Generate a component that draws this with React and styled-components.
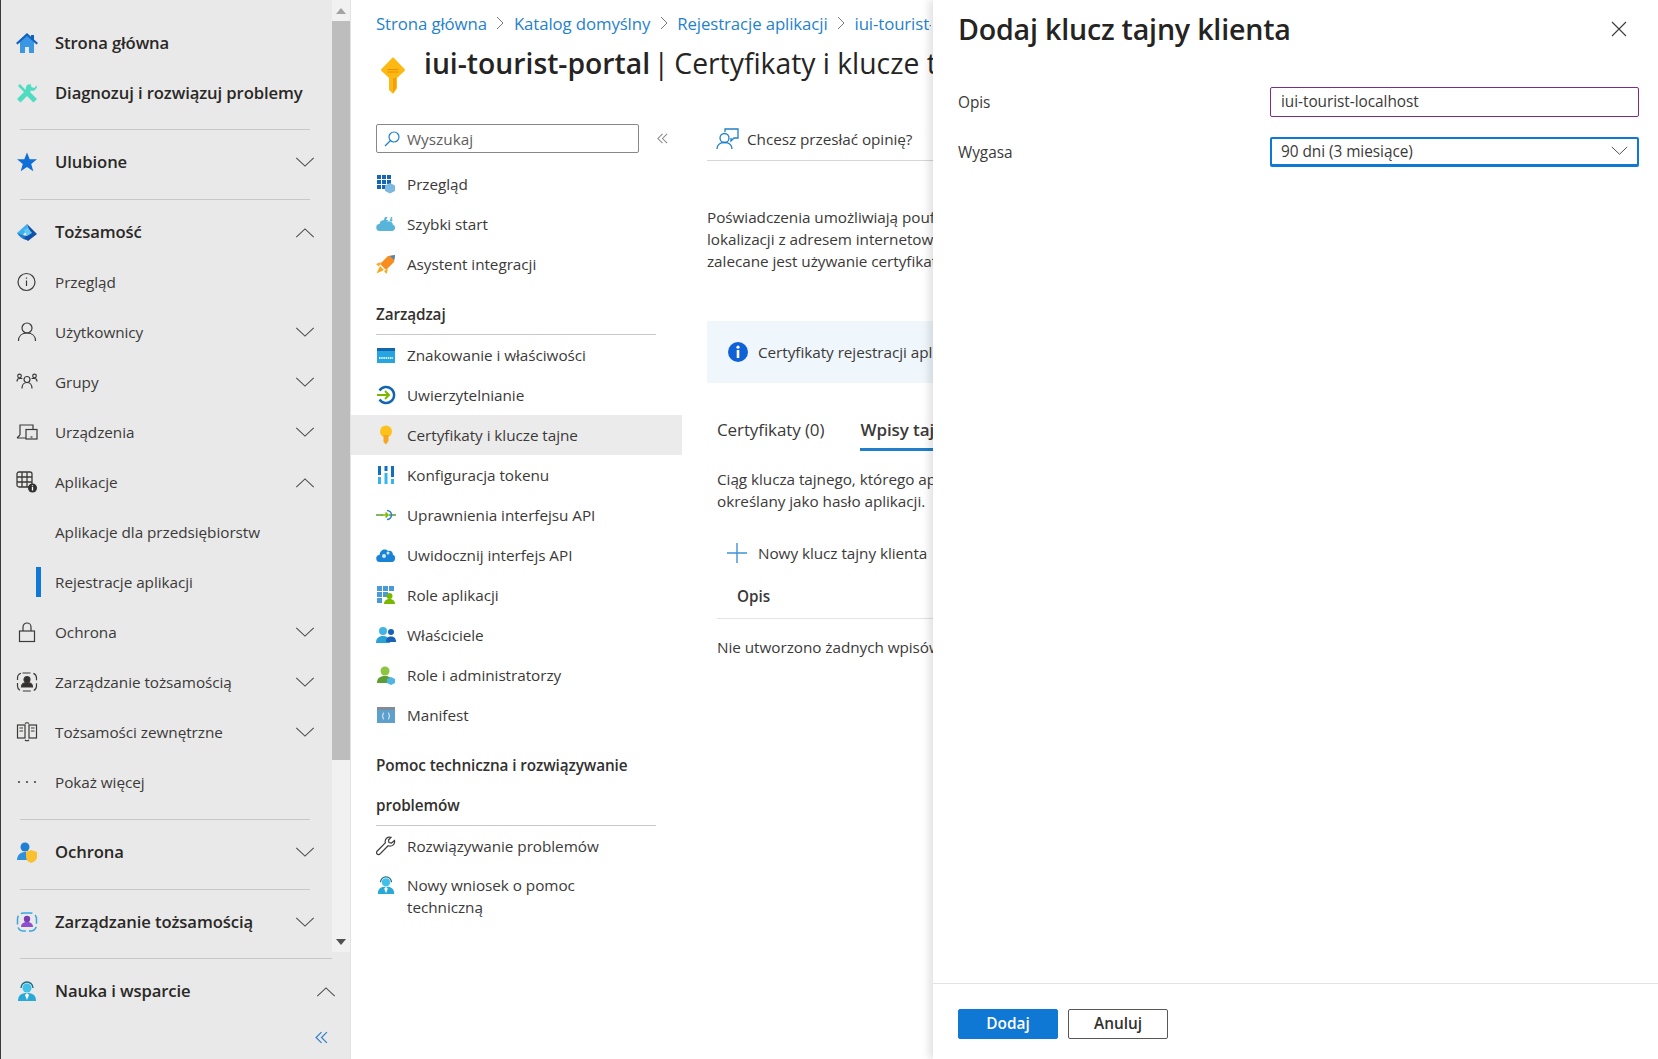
import React from 'react';
import styled, { createGlobalStyle } from 'styled-components';

const GlobalStyle = createGlobalStyle`
    html, body {
        margin: 0;
        height: 100%;
        overflow: hidden;
        background: #fff;
    }

    body {
        font-family: "Open Sans", "Noto Sans", "Liberation Sans", sans-serif;
        color: #323130;
    }

    * {
        box-sizing: border-box;
    }
`;

const Page = styled.div`
    position: relative;
    display: flex;
    width: 1658px;
    height: 1059px;
    overflow: hidden;
`;

/* left portal navigation */

const Nav = styled.nav`
    display: flex;
    flex-direction: column;
    flex: 0 0 350px;
    height: 100%;
    background: #e9e9e9;
    border-left: 1px solid #3a3a3a;
`;

const NavScrollArea = styled.div`
    display: flex;
    flex: 0 0 952px;
`;

const NavList = styled.div`
    flex: 1;
    min-width: 0;
    padding-top: 18px;
`;

const Scrollbar = styled.div`
    display: flex;
    flex-direction: column;
    flex: 0 0 18px;
    background: #f1f1f1;
`;

const ScrollArrow = styled.div`
    display: flex;
    align-items: center;
    justify-content: center;
    flex: 0 0 21px;
    color: ${({ $dark }) => ($dark ? '#505050' : '#a3a3a3')};
`;

const ScrollThumb = styled.div`
    flex: 0 0 739px;
    background: #bdbdbd;
`;

const ScrollTrack = styled.div`
    flex: 1;
`;

const NavRow = styled.div`
    display: flex;
    align-items: center;
    height: 50px;
    padding: 0 ${({ $wide }) => ($wide ? '14px' : '17px')} 0 15px;
    position: relative;
`;

const NavIcon = styled.span`
    display: flex;
    align-items: center;
    justify-content: center;
    flex: 0 0 22px;
    height: 22px;
    margin-right: 17px;
`;

const NavLabel = styled.span`
    flex: 1;
    white-space: nowrap;
    padding-bottom: ${({ $main }) => ($main ? '2px' : '0')};
    font-size: ${({ $main }) => ($main ? '16.65px' : '15.3px')};
    font-weight: ${({ $main }) => ($main ? 600 : 400)};
    letter-spacing: ${({ $main }) => ($main ? '-0.1px' : '-0.05px')};
    color: ${({ $main }) => ($main ? '#292827' : '#3b3a39')};
`;

const ActiveMark = styled.span`
    position: absolute;
    left: 35px;
    top: 10px;
    width: 5px;
    height: 30px;
    background: #0f78d4;
`;

const NavDivider = styled.div`
    height: 1px;
    background: #c8c8c8;
    margin: ${({ $top }) => $top}px ${({ $full }) => ($full ? '18px' : '22px')} 7px 19px;
`;

const NavFooter = styled.div`
    flex: 1;
`;

const NavCollapse = styled.div`
    display: flex;
    justify-content: flex-end;
    padding: 15px 22px 0 0;
`;

/* middle: blade header, resource menu and content */

const Main = styled.main`
    display: flex;
    flex-direction: column;
    flex: 1;
    min-width: 0;
    border-left: 1px solid #e3e3e3;
`;

const Header = styled.header`
    flex: 0 0 124px;
    padding: 10px 0 0 25px;
    white-space: nowrap;
`;

const Breadcrumb = styled.div`
    display: flex;
    align-items: center;
    height: 26px;
    font-size: 16.8px;
    letter-spacing: -0.1px;
    color: #1f82ce;
`;

const CrumbArrow = styled.svg`
    width: 8px;
    height: 14px;
    margin: 0 9.5px;
`;

const LastCrumb = styled.span`
    width: 76px;
    overflow: hidden;
`;

const TitleRow = styled.div`
    display: flex;
    height: 60px;
    margin-top: 8px;
`;

const TitleIcon = styled.span`
    flex: 0 0 48px;
    padding: 13px 0 0 4px;
`;

const Title = styled.h1`
    margin: 0;
    font-size: 28.3px;
    line-height: 39px;
    font-weight: 400;
    color: #252423;

    strong {
        font-weight: 600;
    }
`;

const TitleSeparator = styled.span`
    margin: 0 -2px 0 -4px;
`;

const Body = styled.div`
    display: flex;
    flex: 1;
    min-height: 0;
`;

const Menu = styled.div`
    flex: 0 0 331px;
`;

const SearchRow = styled.div`
    display: flex;
    align-items: center;
    height: 29px;
    margin: 0 0 11px 25px;
`;

const SearchBox = styled.div`
    display: flex;
    align-items: center;
    gap: 7px;
    width: 263px;
    height: 29px;
    padding: 1px 0 0 7px;
    border: 1px solid #8a8886;
    border-radius: 2px;
    font-size: 15.3px;
    color: #605e5c;
`;

const MenuCollapse = styled.span`
    display: flex;
    margin-left: 18px;
`;

const MenuItem = styled.div`
    display: flex;
    align-items: ${({ $wrap }) => ($wrap ? 'flex-start' : 'center')};
    height: ${({ $wrap }) => ($wrap ? 'auto' : '40px')};
    padding: ${({ $wrap }) => ($wrap ? '8px' : '0')} 0 0 25px;
    background: ${({ $active }) => ($active ? '#ebebeb' : 'transparent')};
`;

const MenuIcon = styled.span`
    display: flex;
    align-items: center;
    justify-content: center;
    flex: 0 0 20px;
    height: 22px;
    margin-right: 11px;
`;

const MenuLabel = styled.span`
    font-size: 15.3px;
    line-height: 22px;
    letter-spacing: -0.05px;
    color: #3b3a39;
    width: ${({ $wrap }) => ($wrap ? '190px' : 'auto')};
    white-space: ${({ $wrap }) => ($wrap ? 'normal' : 'nowrap')};
`;

const MenuHeading = styled.div`
    width: 305px;
    margin-top: ${({ $gap }) => $gap}px;
    padding-left: 25px;
`;

const MenuHeadingText = styled.div`
    height: ${({ $lines }) => $lines * 40 + 1}px;
    border-bottom: 1px solid #c8c8c8;
    font-size: 15.3px;
    line-height: 40px;
    font-weight: 600;
    letter-spacing: -0.1px;
    color: #323130;
`;

const Content = styled.section`
    flex: 1;
    min-width: 0;
    padding-left: 25px;
    white-space: nowrap;
    overflow: hidden;
    font-size: 15.3px;
    letter-spacing: -0.05px;
    color: #3b3a39;
`;

const Toolbar = styled.div`
    display: flex;
    align-items: center;
    gap: 8px;
    height: 37px;
    padding: 0 0 6px 9px;
    border-bottom: 1px solid #d6d6d6;
`;

const Paragraph = styled.p`
    margin: ${({ $top }) => $top}px 0 0 ${({ $indent }) => $indent || 0}px;
    line-height: 22px;
`;

const InfoBand = styled.div`
    display: flex;
    align-items: center;
    gap: 10px;
    height: 62px;
    margin-top: 49px;
    padding-left: 21px;
    background: #eff6fc;
`;

const Tabs = styled.div`
    display: flex;
    gap: 36px;
    height: 32px;
    margin: 36px 0 0 10px;
`;

const Tab = styled.div`
    height: 32px;
    font-size: 17px;
    line-height: 22px;
    font-weight: ${({ $active }) => ($active ? 600 : 400)};
    letter-spacing: -0.1px;
    border-bottom: ${({ $active }) => ($active ? '3px solid #1f7fc9' : 'none')};
`;

const AddButton = styled.div`
    display: flex;
    align-items: center;
    gap: 11px;
    height: 30px;
    margin: 26px 0 0 20px;
`;

const TableHead = styled.div`
    height: 40px;
    margin: 11px 0 0 10px;
    padding-left: 20px;
    border-bottom: 1px solid #e3e3e3;
    line-height: 34px;
    font-weight: 600;
`;

/* blade lying over the page */

const Drawer = styled.aside`
    position: absolute;
    top: 0;
    right: 0;
    bottom: 0;
    display: flex;
    flex-direction: column;
    width: 725px;
    background: #fff;
    box-shadow: -4px 0 8px rgba(0, 0, 0, 0.12);
`;

const DrawerHead = styled.div`
    display: flex;
    align-items: center;
    justify-content: space-between;
    height: 58px;
    padding: 0 31px 0 25px;
`;

const DrawerTitle = styled.h2`
    margin: 0 0 2px;
    font-size: 28.6px;
    font-weight: 600;
    letter-spacing: -0.2px;
    color: #252423;
`;

const DrawerBody = styled.div`
    flex: 1;
    display: flex;
    flex-direction: column;
    gap: 20px;
    padding: 29px 19px 0 25px;
`;

const FieldRow = styled.div`
    display: grid;
    grid-template-columns: 312px 369px;
    align-items: center;
    font-size: 15.4px;
    letter-spacing: -0.05px;
    color: #3b3a39;
`;

const FieldLabel = styled.span`
    padding-top: 1px;
`;

const TextField = styled.input`
    width: 100%;
    height: 30px;
    padding: 0 10px 1px;
    border: 1px solid #7b2d8b;
    border-radius: 2px;
    outline: none;
    font: inherit;
    letter-spacing: inherit;
    color: #3b3a39;
`;

const SelectField = styled.div`
    display: flex;
    align-items: center;
    justify-content: space-between;
    height: 30px;
    padding: 0 9px 1px 9px;
    border: 2px solid #0f78d4;
    border-bottom-width: 3px;
    border-radius: 2px;
`;

const DrawerFooter = styled.div`
    display: flex;
    gap: 10px;
    flex: 0 0 76px;
    padding: 25px 0 0 25px;
    border-top: 1px solid #e3e3e3;
`;

const Button = styled.div`
    display: flex;
    align-items: center;
    justify-content: center;
    width: 100px;
    height: 30px;
    padding-bottom: 2px;
    border: 1px solid ${({ $primary }) => ($primary ? '#0f78d4' : '#5a5856')};
    border-radius: 2px;
    background: ${({ $primary }) => ($primary ? '#0f78d4' : '#fff')};
    color: ${({ $primary }) => ($primary ? '#fff' : '#323130')};
    font-size: 15.4px;
    font-weight: 600;
`;

/* icons */

const Chevron = ({ up, color = '#4a4a4a', w = 20, h = 11 }) => (
    <svg width={w} height={h} viewBox="0 0 21 12" fill="none">
        <path d={up ? 'M1 11 10.5 2 20 11' : 'M1 1l9.5 9L20 1'} stroke={color} strokeWidth="1.1" />
    </svg>
);

const DoubleArrow = ({ color, size = 11 }) => (
    <svg width={size} height={size} viewBox="0 0 12 12" fill="none">
        <path d="M6 1 1 6l5 5M11 1 6 6l5 5" stroke={color} strokeWidth="1.1" />
    </svg>
);

const Line = ({ children, size = 22, view = 22 }) => (
    <svg width={size} height={size} viewBox={`0 0 ${view} ${view}`} fill="none" stroke="#3b3a39" strokeWidth="1.2">
        {children}
    </svg>
);

const Fill = ({ children, w = 20, h = 20 }) => (
    <svg width={w} height={h} viewBox={`0 0 ${w} ${h}`}>
        {children}
    </svg>
);

const HomeIcon = () => (
    <Fill w={22} h={22}>
        <path d="M4 10v11h5v-6h4v6h5V10l-7-6z" fill="#3b97e3" />
        <path d="M11 1 0 11l1.5 1.6L11 4.2l9.5 8.4L22 11l-4-3.6V3h-3v1.7z" fill="#0f62c0" />
    </Fill>
);

const ToolsIcon = () => (
    <Fill w={22} h={22}>
        <path d="M4 2 2 4l6 6-7 7 3.5 3.5L11 14l6.5 6.5L21 17l-7-7 1-1.5c3 1 6-1 6-5l-3 2.4-2.7-.9L15 2.5c-3-.7-5.300 1.200-5.300 4L9.500 8z" fill="#4fdcc0" />
    </Fill>
);

const StarIcon = () => (
    <Fill w={22} h={22}>
        <path d="M11 1.500 13.700 8.300H21L15.200 12.900 17.300 20.200 11 16 4.700 20.200 6.800 12.900 1 8.300H8.300z" fill="#0f6fd6" />
    </Fill>
);

const IdentityIcon = () => (
    <Fill w={22} h={22}>
        <path d="M11 3 1 12l5 3.600 6-8.600z" fill="#3fb0ee" />
        <path d="M1 12c2 3 5 6 9 7l2-4-6-1z" fill="#1a7bd0" />
        <path d="M11 3l10 10-9 7-4-3 6-5z" fill="#1450a8" />
        <path d="M8 9l4-2 4 5-5 3z" fill="#5ec8f2" />
    </Fill>
);

const InfoLine = () => (
    <Line>
        <circle cx="10.500" cy="11" r="8.500" />
        <path d="M10.500 9.500v5.500M10.500 6.500v1.300" />
    </Line>
);

const UserLine = () => (
    <Line>
        <circle cx="11" cy="7" r="5" />
        <path d="M2.500 20c0-5 3.500-8 8.500-8s8.500 3 8.500 8" />
    </Line>
);

const GroupLine = () => (
    <Line>
        <circle cx="11" cy="8.500" r="3" />
        <path d="M6 17.500c0-3.500 2-6 5-6s5 2.500 5 6" />
        <circle cx="3.500" cy="5" r="1.800" />
        <circle cx="18.500" cy="5" r="1.800" />
        <path d="M1 10.500c0-2 1-3 2.500-3h3M21 10.500c0-2-1-3-2.500-3h-3" />
    </Line>
);

const DevicesLine = () => (
    <Line>
        <path d="M4 14V4h13v4M1 17h9M4 14l-3 3" />
        <rect x="10" y="8.500" width="11" height="9.500" />
        <path d="M14.500 16h2" />
    </Line>
);

const AppsLine = () => (
    <svg width="22" height="22" viewBox="0 0 22 22" fill="none" stroke="#3b3a39" strokeWidth="1.300">
        <rect x="1" y="1" width="15" height="15" rx="2" />
        <path d="M1 6h15M1 11h15M6 1v15M11 1v15" />
        <circle cx="16.500" cy="17" r="4.500" fill="#323130" stroke="none" />
        <path d="M16.500 16v3.500M16.500 14.300v.9" stroke="#fff" />
    </svg>
);

const LockLine = () => (
    <Line>
        <rect x="3.500" y="10" width="15" height="10.500" />
        <path d="M7 10V6a4 4 0 0 1 8 0v4" />
    </Line>
);

const GovernanceLine = () => (
    <Line>
        <rect x="1.500" y="2" width="19" height="18" rx="5" strokeDasharray="8 3" />
        <circle cx="11" cy="8.500" r="3" fill="#323130" />
        <path d="M5.500 16c0-3 2.500-4.500 5.500-4.500s5.500 1.500 5.500 4.500z" fill="#323130" />
    </Line>
);

const ExternalLine = () => (
    <Line>
        <rect x="1.500" y="4" width="7.500" height="13" />
        <rect x="13" y="4" width="7.500" height="13" />
        <path d="M3.500 7h3.500M3.500 10h3.500M15 7h3.500M15 10h3.500M9 2.500c1-1 3-1 4 0M9 19c1 1 3 1 4 0" />
    </Line>
);

const DotsIcon = () => (
    <Fill w={20} h={6}>
        <circle cx="2" cy="3" r="1" fill="#3b3a39" />
        <circle cx="10" cy="3" r="1" fill="#3b3a39" />
        <circle cx="18" cy="3" r="1" fill="#3b3a39" />
    </Fill>
);

const ShieldUserIcon = () => (
    <Fill w={22} h={22}>
        <circle cx="9" cy="6" r="4.500" fill="#1f7fd4" />
        <path d="M1 19c0-5 3.500-8 8-8s7 2 7 8z" fill="#2f90dc" />
        <path d="M15 9l6 2v5c0 3-3 5-6 6-3-1-5-3-5-6v-5z" fill="#fbc02d" />
    </Fill>
);

const GovernanceIcon = () => (
    <Fill w={22} h={22}>
        <rect x="1.500" y="2" width="19" height="18" rx="6" fill="none" stroke="#38a7e0" strokeWidth="1.500" strokeDasharray="9 3" />
        <circle cx="11" cy="8" r="3.200" fill="#7a3db8" />
        <path d="M5 16c0-3.500 2.500-5 6-5s6 1.500 6 5z" fill="#8e4fcf" />
    </Fill>
);

const SupportIcon = ({ size = 22 }) => (
    <svg width={size} height={size} viewBox="0 0 22 22">
        <path d="M5 8a6 6 0 0 1 12 0" fill="none" stroke="#1b6a86" strokeWidth="1.400" />
        <circle cx="11" cy="8" r="4.500" fill="#3fc1e8" />
        <path d="M2 21c0-6 3.500-8 9-8s9 2 9 8z" fill="#28a9d8" />
        <path d="M11 13l-2 2 2 5 2-5z" fill="#fff" />
    </svg>
);

const KeyIcon = () => (
    <svg width="26" height="37" viewBox="0 0 26 37">
        <path d="M13 1.500 24 13 16 20.500 16 31 13 35.500 10 32.500 10 20.500 2 13z" fill="#fdb913" stroke="#fdb913" strokeWidth="2" strokeLinejoin="round" />
        <path d="M13 21h3v10L13 35.500z" fill="#f59e0b" />
        <path d="M7.500 12.500h11M7.500 15h11" stroke="#f08c00" strokeWidth="1.200" />
    </svg>
);

const SmallKeyIcon = () => (
    <Fill w={16} h={20}>
        <circle cx="8" cy="6.500" r="6" fill="#fcc21b" />
        <path d="M5.500 10h5v6L8 19.500 5.500 17z" fill="#f5a623" />
    </Fill>
);

const OverviewIcon = () => (
    <Fill>
        <path d="M1 1h4v4H1zM6 1h4v4H6zM11 1h4v4h-4zM1 6h4v4H1zM6 6h4v4H6zM11 6h4v4h-4zM1 11h4v4H1zM6 11h4v4H6z" fill="#1566b8" />
        <path d="M14 9l5 2.500V17l-5 2.500L9 17v-5.500z" fill="#7cb8e0" />
    </Fill>
);

const CloudBoltIcon = () => (
    <Fill>
        <path d="M4 17a3.500 3.500 0 0 1-.500-7C4 6 8 5 10 8c3-2 7 0 7 3 3 0 3 6-1 6z" fill="#59b4d9" />
        <path d="M9 3 7 8h2.500L8 11l4.500-5H10l1.500-3zM15 3l-1.500 4H15l-1 2.500 3-4h-1.500L16.500 3z" fill="#59b4d9" />
    </Fill>
);

const RocketIcon = () => (
    <Fill>
        <path d="M19 1l-1 7-8 8-6-6 8-8z" fill="#f78d1e" />
        <path d="M19 1l-.8 5L14 2z" fill="#3f86c8" />
        <path d="M5 8 0 10l3 2.500zM12 15l-1.500 5L8 17zM4 12l-3.500 7.500L8 16z" fill="#f7a81e" />
    </Fill>
);

const BrandingIcon = () => (
    <Fill w={20} h={18}>
        <rect x="1" y="2" width="18" height="15" fill="#27a5e0" />
        <rect x="1" y="2" width="18" height="3" fill="#1266b0" />
        <path d="M3 12h14" stroke="#d4f2ff" strokeWidth="2" strokeDasharray="1.500 .7" />
    </Fill>
);

const AuthIcon = () => (
    <svg width="20" height="20" viewBox="0 0 20 20" fill="none">
        <path d="M3.500 5.500A8 8 0 1 1 3.500 14.500" stroke="#1266b0" strokeWidth="2.400" />
        <path d="M1 10h12M9 6l4 4-4 4" stroke="#7ab800" strokeWidth="2" />
    </svg>
);

const TokenIcon = () => (
    <svg width="18" height="20" viewBox="0 0 18 20">
        <path d="M1 1h3v9H1zM7.500 1h3v5h-3zM14 1h3v11h-3z" fill="#0f6fc0" />
        <path d="M1 12h3v7H1zM7.500 8h3v11h-3zM14 14h3v5h-3z" fill="#36b6e8" />
    </svg>
);

const PermissionIcon = () => (
    <svg width="20" height="12" viewBox="0 0 20 12" fill="none">
        <path d="M0 6h7M13 6h7" stroke="#5a9e2f" strokeWidth="1.500" />
        <path d="M11 1.500a4.500 4.500 0 1 1 0 9" stroke="#2d82c4" strokeWidth="1.500" />
        <path d="M6 6h6M9.500 3.500 12 6 9.500 8.500" stroke="#7ab800" strokeWidth="1.500" />
    </svg>
);

const ExposeIcon = () => (
    <Fill w={20} h={16}>
        <path d="M4 15a3.500 3.500 0 0 1-.500-7C4 3 9 1 12 4c3-1 5 1 5 4 3 0 3 7-1 7z" fill="#1a83d6" />
        <circle cx="8" cy="9" r="2" fill="#cfe8f7" />
        <circle cx="12" cy="6" r="1.500" fill="#cfe8f7" />
    </Fill>
);

const RolesIcon = () => (
    <Fill>
        <path d="M1 1h5v5H1zM7 1h5v5H7zM13 1h5v5h-5zM1 7h5v5H1zM7 7h5v5H7zM1 13h5v5H1z" fill="#4a9ad6" />
        <circle cx="13.500" cy="11" r="3" fill="#7ab800" />
        <path d="M8 19c0-3.500 2.500-5 5.500-5s5.500 1.500 5.500 5z" fill="#7ab800" />
    </Fill>
);

const OwnersIcon = () => (
    <Fill w={20} h={18}>
        <circle cx="7" cy="5" r="4" fill="#3fb5e6" />
        <path d="M0 17c0-5 3-7 7-7s7 2 7 7z" fill="#2aa2d6" />
        <circle cx="15" cy="6" r="3" fill="#1860b8" />
        <path d="M10 16c0-4 2-5.500 5-5.500s5 1.500 5 5.500z" fill="#1860b8" />
    </Fill>
);

const RoleAdminIcon = () => (
    <Fill w={20} h={20}>
        <circle cx="9" cy="6" r="4.500" fill="#8cc63f" />
        <path d="M1 18c0-5 3-7 8-7s7 2 7 7z" fill="#5c9e31" />
        <path d="M15 12l4 2v4l-4 2-4-2v-4z" fill="#4fb5e6" />
    </Fill>
);

const ManifestIcon = () => (
    <Fill w={20} h={18}>
        <rect x="1" y="1" width="18" height="16" fill="#5ea0cc" />
        <rect x="1" y="1" width="18" height="3" fill="#7f8c99" />
        <path d="M8 7c-1 0-1 .5-1 1.500S6.500 10 6 10c.5 0 1 .5 1 1.500S7 13 8 13M12 7c1 0 1 .5 1 1.500s.5 1.500 1 1.500c-.5 0-1 .5-1 1.500s0 1.500-1 1.500" stroke="#fff" fill="none" />
    </Fill>
);

const WrenchLine = () => (
    <svg width="20" height="20" viewBox="0 0 20 20" fill="none" stroke="#3b3a39" strokeWidth="1.200">
        <path d="M18.500 4.500 15.500 7 13 6.500 12.500 4 15 1.300C11.500.3 8.500 3 9.300 6.800L1.300 15c-1 1-1 2.200-.2 3s2.200.8 3-.2l8-8c3.700 1.200 7.200-1.300 6.400-5.300z" />
    </svg>
);

const FeedbackIcon = () => (
    <svg width="23" height="22" viewBox="0 0 23 22" fill="none" stroke="#1f7fc9" strokeWidth="1.300">
        <circle cx="8.500" cy="10" r="4.500" />
        <path d="M1 21c0-4 3-6.500 7.500-6.500S16 17 16 21" />
        <path d="M9 4V1h13v9h-4l-3 3v-3" />
    </svg>
);

const SearchIcon = () => (
    <svg width="16" height="16" viewBox="0 0 16 16" fill="none" stroke="#1f7fc9" strokeWidth="1.200">
        <circle cx="10" cy="6" r="5" />
        <path d="M6.500 9.500 1 15" />
    </svg>
);

const InfoFilled = () => (
    <svg width="20" height="20" viewBox="0 0 20 20">
        <circle cx="10" cy="10" r="10" fill="#0f62d6" />
        <rect x="8.700" y="8" width="2.600" height="8" fill="#fff" />
        <circle cx="10" cy="5.200" r="1.600" fill="#fff" />
    </svg>
);

const PlusIcon = () => (
    <svg width="20" height="20" viewBox="0 0 20 20" stroke="#3f93d6" strokeWidth="1.400">
        <path d="M10 0v20M0 10h20" />
    </svg>
);

const CloseIcon = () => (
    <svg width="16" height="16" viewBox="0 0 16 16" stroke="#3b3a39" strokeWidth="1.100">
        <path d="M1 1l14 14M15 1 1 15" />
    </svg>
);

/* data */

const navTop = [
    { label: 'Strona główna', icon: <HomeIcon />, main: true },
    { label: 'Diagnozuj i rozwiązuj problemy', icon: <ToolsIcon />, main: true },
    { divider: 11 },
    { label: 'Ulubione', icon: <StarIcon />, main: true, chevron: 'down' },
    { divider: 12 },
    { label: 'Tożsamość', icon: <IdentityIcon />, main: true, chevron: 'up' },
    { label: 'Przegląd', icon: <InfoLine /> },
    { label: 'Użytkownicy', icon: <UserLine />, chevron: 'down' },
    { label: 'Grupy', icon: <GroupLine />, chevron: 'down' },
    { label: 'Urządzenia', icon: <DevicesLine />, chevron: 'down' },
    { label: 'Aplikacje', icon: <AppsLine />, chevron: 'up' },
    { label: 'Aplikacje dla przedsiębiorstw' },
    { label: 'Rejestracje aplikacji', active: true },
    { label: 'Ochrona', icon: <LockLine />, chevron: 'down' },
    { label: 'Zarządzanie tożsamością', icon: <GovernanceLine />, chevron: 'down' },
    { label: 'Tożsamości zewnętrzne', icon: <ExternalLine />, chevron: 'down' },
    { label: 'Pokaż więcej', icon: <DotsIcon /> },
    { divider: 12 },
    { label: 'Ochrona', icon: <ShieldUserIcon />, main: true, chevron: 'down' },
    { divider: 12 },
    { label: 'Zarządzanie tożsamością', icon: <GovernanceIcon />, main: true, chevron: 'down' },
];

const menuTop = [
    { label: 'Przegląd', icon: <OverviewIcon /> },
    { label: 'Szybki start', icon: <CloudBoltIcon /> },
    { label: 'Asystent integracji', icon: <RocketIcon /> },
];

const menuManage = [
    { label: 'Znakowanie i właściwości', icon: <BrandingIcon /> },
    { label: 'Uwierzytelnianie', icon: <AuthIcon /> },
    { label: 'Certyfikaty i klucze tajne', icon: <SmallKeyIcon />, active: true },
    { label: 'Konfiguracja tokenu', icon: <TokenIcon /> },
    { label: 'Uprawnienia interfejsu API', icon: <PermissionIcon /> },
    { label: 'Uwidocznij interfejs API', icon: <ExposeIcon /> },
    { label: 'Role aplikacji', icon: <RolesIcon /> },
    { label: 'Właściciele', icon: <OwnersIcon /> },
    { label: 'Role i administratorzy', icon: <RoleAdminIcon /> },
    { label: 'Manifest', icon: <ManifestIcon /> },
];

const NavEntry = ({ item, wide }) => {
    if (item.divider) {
        return <NavDivider $top={item.divider} />;
    }
    return (
        <NavRow $wide={wide}>
            {item.active && <ActiveMark />}
            <NavIcon>{item.icon}</NavIcon>
            <NavLabel $main={item.main}>{item.label}</NavLabel>
            {item.chevron && <Chevron up={item.chevron === 'up'} />}
        </NavRow>
    );
};

const MenuEntry = ({ item }) => (
    <MenuItem $active={item.active} $wrap={item.wrap}>
        <MenuIcon>{item.icon}</MenuIcon>
        <MenuLabel $wrap={item.wrap}>{item.label}</MenuLabel>
    </MenuItem>
);

const App = () => {
    return (
        <Page>
            <GlobalStyle />
            <Nav>
                <NavScrollArea>
                    <NavList>
                        {navTop.map((item, i) => (
                            <NavEntry key={i} item={item} />
                        ))}
                    </NavList>
                    <Scrollbar>
                        <ScrollArrow>
                            <svg width="10" height="6" viewBox="0 0 10 6"><path d="M5 0l5 6H0z" fill="currentColor" /></svg>
                        </ScrollArrow>
                        <ScrollThumb />
                        <ScrollTrack />
                        <ScrollArrow $dark>
                            <svg width="10" height="6" viewBox="0 0 10 6"><path d="M0 0h10L5 6z" fill="currentColor" /></svg>
                        </ScrollArrow>
                    </Scrollbar>
                </NavScrollArea>
                <NavFooter>
                    <NavDivider $top={6} $full />
                    <NavEntry wide item={{ label: 'Nauka i wsparcie', icon: <SupportIcon />, main: true, chevron: 'up' }} />
                    <NavCollapse>
                        <DoubleArrow color="#2f7fc9" size={13} />
                    </NavCollapse>
                </NavFooter>
            </Nav>

            <Main>
                <Header>
                    <Breadcrumb>
                        Strona główna
                        <CrumbArrow viewBox="0 0 8 14" fill="none" stroke="#7a7a7a"><path d="M1 1l6 6-6 6" /></CrumbArrow>
                        Katalog domyślny
                        <CrumbArrow viewBox="0 0 8 14" fill="none" stroke="#7a7a7a"><path d="M1 1l6 6-6 6" /></CrumbArrow>
                        Rejestracje aplikacji
                        <CrumbArrow viewBox="0 0 8 14" fill="none" stroke="#7a7a7a"><path d="M1 1l6 6-6 6" /></CrumbArrow>
                        <LastCrumb>iui-tourist-portal</LastCrumb>
                    </Breadcrumb>
                    <TitleRow>
                        <TitleIcon><KeyIcon /></TitleIcon>
                        <Title>
                            <strong>iui-tourist-portal</strong> <TitleSeparator>|</TitleSeparator> Certyfikaty i klucze tajne
                        </Title>
                    </TitleRow>
                </Header>
                <Body>
                    <Menu>
                        <SearchRow>
                            <SearchBox><SearchIcon />Wyszukaj</SearchBox>
                            <MenuCollapse><DoubleArrow color="#8a8886" /></MenuCollapse>
                        </SearchRow>
                        {menuTop.map((item) => (
                            <MenuEntry key={item.label} item={item} />
                        ))}
                        <MenuHeading $gap={10}>
                            <MenuHeadingText $lines={1}>Zarządzaj</MenuHeadingText>
                        </MenuHeading>
                        {menuManage.map((item) => (
                            <MenuEntry key={item.label} item={item} />
                        ))}
                        <MenuHeading $gap={10}>
                            <MenuHeadingText $lines={2}>Pomoc techniczna i rozwiązywanie problemów</MenuHeadingText>
                        </MenuHeading>
                        <MenuEntry item={{ label: 'Rozwiązywanie problemów', icon: <WrenchLine /> }} />
                        <MenuEntry item={{ label: 'Nowy wniosek o pomoc techniczną', icon: <SupportIcon size={20} />, wrap: true }} />
                    </Menu>
                    <Content>
                        <Toolbar><FeedbackIcon />Chcesz przesłać opinię?</Toolbar>
                        <Paragraph $top={45}>
                            Poświadczenia umożliwiają poufnym aplikacjom uwierzytelnianie
                            <br />
                            lokalizacji z adresem internetowym
                            <br />
                            zalecane jest używanie certyfikatów
                        </Paragraph>
                        <InfoBand><InfoFilled />Certyfikaty rejestracji aplikacji</InfoBand>
                        <Tabs>
                            <Tab>Certyfikaty (0)</Tab>
                            <Tab $active>Wpisy tajne klienta (0)</Tab>
                        </Tabs>
                        <Paragraph $top={17} $indent={10}>
                            Ciąg klucza tajnego, którego aplikacja używa
                            <br />
                            określany jako hasło aplikacji.
                        </Paragraph>
                        <AddButton><PlusIcon />Nowy klucz tajny klienta</AddButton>
                        <TableHead>Opis</TableHead>
                        <Paragraph $top={17} $indent={10}>Nie utworzono żadnych wpisów tajnych</Paragraph>
                    </Content>
                </Body>
            </Main>

            <Drawer>
                <DrawerHead>
                    <DrawerTitle>Dodaj klucz tajny klienta</DrawerTitle>
                    <CloseIcon />
                </DrawerHead>
                <DrawerBody>
                    <FieldRow>
                        <FieldLabel>Opis</FieldLabel>
                        <TextField readOnly value="iui-tourist-localhost" />
                    </FieldRow>
                    <FieldRow>
                        <FieldLabel>Wygasa</FieldLabel>
                        <SelectField>
                            90 dni (3 miesiące)
                            <Chevron color="#3b3a39" w={17} h={10} />
                        </SelectField>
                    </FieldRow>
                </DrawerBody>
                <DrawerFooter>
                    <Button $primary>Dodaj</Button>
                    <Button>Anuluj</Button>
                </DrawerFooter>
            </Drawer>
        </Page>
    );
}

export default App;
